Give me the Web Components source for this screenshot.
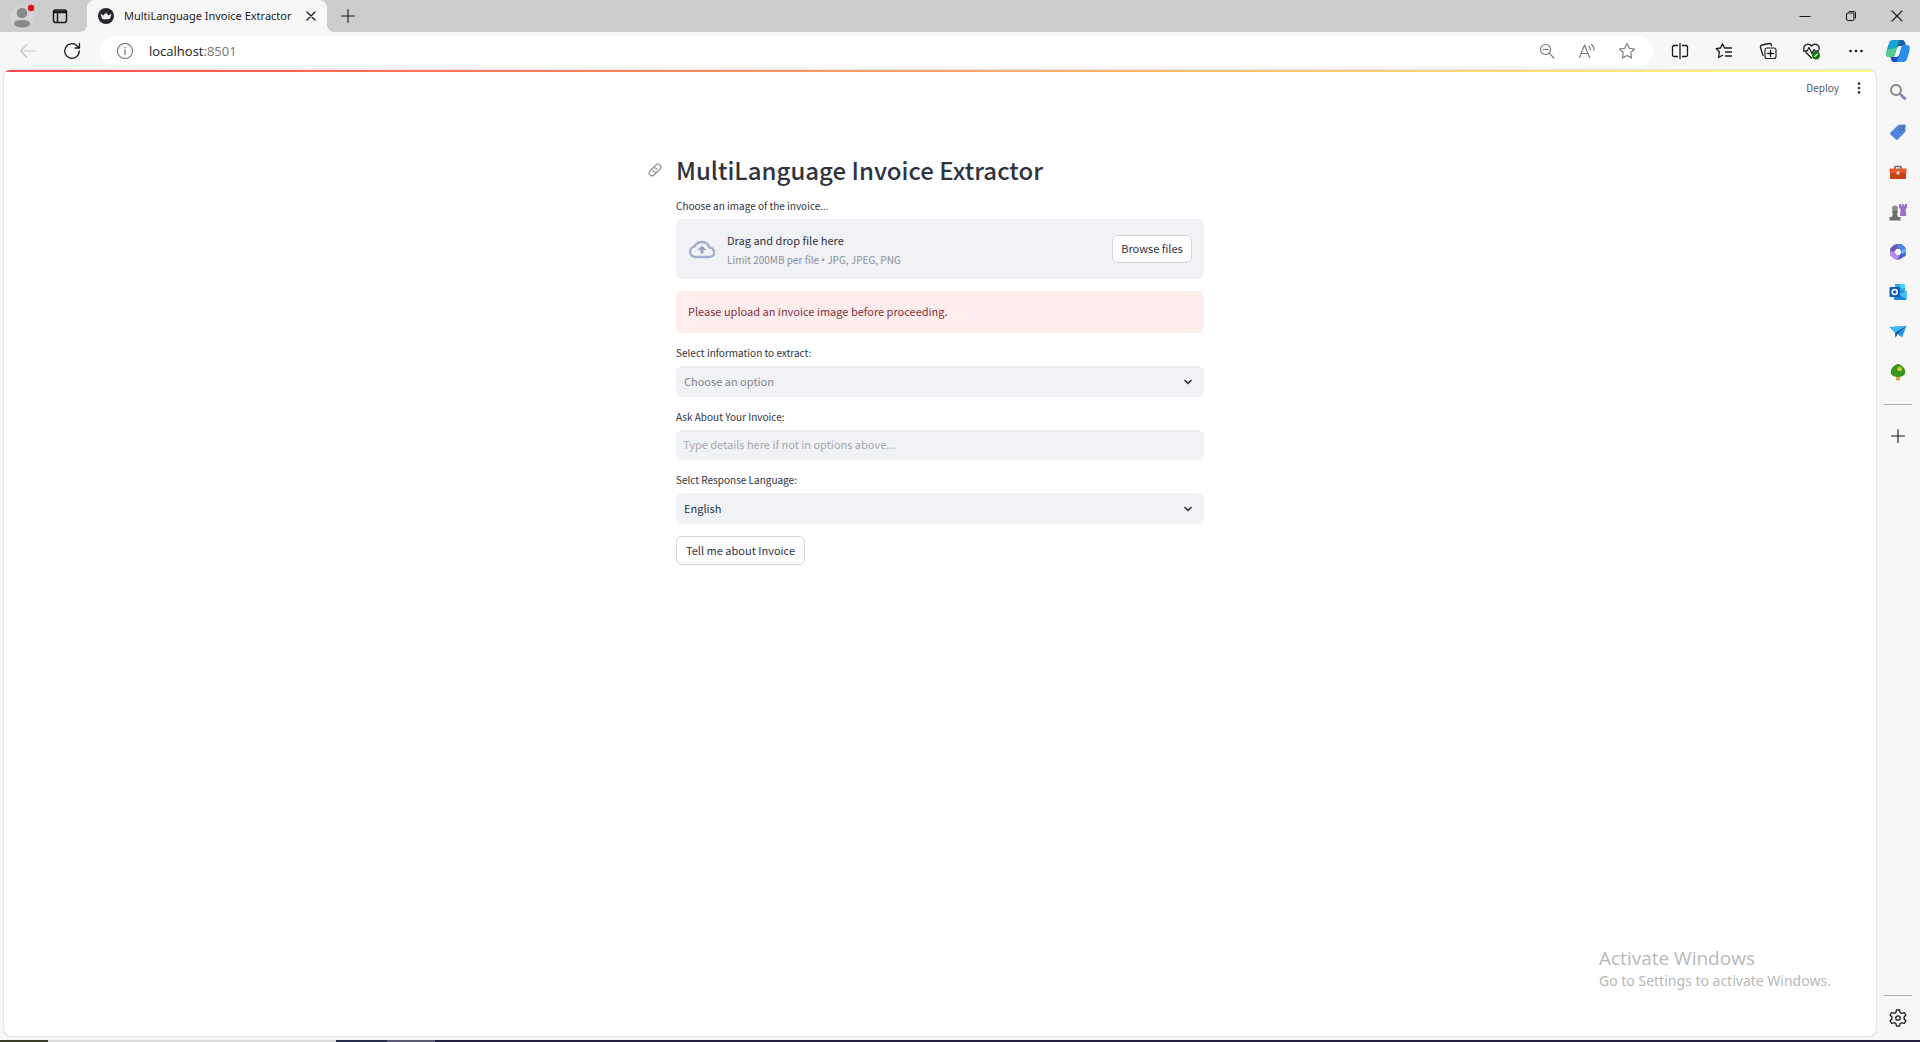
<!DOCTYPE html>
<html lang="en">
<head>
<meta charset="utf-8">
<title>MultiLanguage Invoice Extractor</title>
<style>
html,body{margin:0;height:100%}
body{font-family:"Open Sans","Noto Sans",sans-serif;font-size:12px;color:#1b1b1b;background:#f7f7f7;
--app-font:"Noto Sans CJK SC","Open Sans",sans-serif;--ink:#31333f;--field:#f0f2f6}
</style>
</head>
<body>
<browser-window>
  <tab-strip slot="tabs" title-text="MultiLanguage Invoice Extractor"></tab-strip>
  <tool-bar slot="toolbar"></tool-bar>
  <side-bar slot="sidebar"></side-bar>
  <app-page>
    <page-title>MultiLanguage Invoice Extractor</page-title>
    <file-uploader label="Choose an image of the invoice..." hint="Limit 200MB per file • JPG, JPEG, PNG"></file-uploader>
    <alert-box>Please upload an invoice image before proceeding.</alert-box>
    <select-field label="Select information to extract:" value="Choose an option" empty></select-field>
    <text-field label="Ask About Your Invoice:" placeholder="Type details here if not in options above..."></text-field>
    <select-field label="Selct Response Language:" value="English"></select-field>
    <action-button>Tell me about Invoice</action-button>
  </app-page>
  <activation-note slot="note"></activation-note>
</browser-window>
<script>
const svg=(w,h,body)=>`<svg width="${w}" height="${h}" viewBox="0 0 ${w} ${h}" fill="none" stroke="currentColor" stroke-width="1.1" stroke-linecap="round" stroke-linejoin="round" aria-hidden="true">${body}</svg>`;
const ICONS={
profile:svg(26,26,`<circle cx="13" cy="14" r="12" fill="#d6d4d2" stroke="none"/><circle cx="13" cy="10" r="5.3" fill="#8b8987" stroke="none"/><path d="M5 20.500c0-2.500 3-3.500 8-3.500s8 1 8 3.500-3.500 4-8 4-8-1.500-8-4z" fill="#8b8987" stroke="none"/><circle cx="22" cy="5" r="3.200" fill="#e00b1c" stroke="none"/>`),
tabs:svg(16,16,`<rect x="1.500" y="2" width="13" height="12.500" rx="2" stroke-width="1.500"/><path d="M1.500 3.500h13M2 4.500h12M5.500 5v9" stroke-width="1.500"/>`),
crown:svg(16,16,`<circle cx="8" cy="8" r="8" fill="#262730" stroke="none"/><path d="M2.500 5.800 5.500 7.500 8 4.500l2.500 3 3-1.700-1.500 5q-4 1-8 0z" fill="#f4f4f6" stroke="none"/>`),
close:svg(10,10,`<path d="M1 1l8 8M9 1l-8 8" stroke-width="1.300"/>`),
plus:svg(16,16,`<path d="M8 1.500v13M1.500 8h13"/>`),
min:svg(12,12,`<path d="M1 6.500h10"/>`),
restore:svg(12,12,`<rect x="1.500" y="3" width="7.500" height="7.500" rx="1.500"/><path d="M4 1.500h4.500a2 2 0 0 1 2 2V8"/>`),
winclose:svg(12,12,`<path d="M1 1l10 10M11 1L1 11"/>`),
back:svg(18,16,`<path d="M16.500 8H1.500M8 1.500 1.500 8 8 14.500" stroke="#c6c6c6"/>`),
reload:svg(18,18,`<path d="M16.300 9A7.300 7.300 0 1 1 14 3.700L16.300 6M16.500 1.500V6H12" stroke-width="1.300"/>`),
info:svg(18,18,`<circle cx="9" cy="9" r="7.500"/><path d="M9 8v4.500M9 5.500v.3" stroke-width="1.300"/>`),
zoomout:svg(16,16,`<circle cx="6.500" cy="6.500" r="5"/><path d="M4 6.500h5M10.300 10.300l4.700 4.700"/>`),
aloud:svg(18,16,`<path d="M1.500 14.500 6.500 2l5 12.500M3.200 10.500h6.600M11 3.500q1.500 1.500 1.300 3.500M13.500 1.500q3 2.500 2.500 6"/>`),
star:svg(18,18,`<path d="M9 1.500l2.300 4.800 5.200.7-3.800 3.700.9 5.300L9 13.500 4.400 16l.9-5.300L1.500 7l5.200-.7z"/>`),
split:svg(18,18,`<path d="M9 1.500v15M6.500 3.500H3a1.500 1.500 0 0 0-1.500 1.500v8A1.500 1.500 0 0 0 3 14.500h3.500M11.500 3.500H15A1.500 1.500 0 0 1 16.500 5v8a1.500 1.500 0 0 1-1.500 1.500h-3.500" stroke-width="1.300"/>`),
favs:svg(18,18,`<path d="M11 6 9.500 6 7.500 1.800 5.500 6 1.200 6.700l3.200 3-.8 5.800 3.900-2.200M11 6h5.500M10.500 10h6M10.500 14h6" stroke-width="1.300"/>`),
collect:svg(18,18,`<rect x="6" y="6" width="11" height="10.500" rx="2"/><path d="M11.500 8.500v6M8.500 11.500h6M4 13.500l-2.500-8a2 2 0 0 1 1.500-2.500l7-1.500a2 2 0 0 1 2.500 2" stroke-width="1.300"/>`),
heart:svg(20,18,`<path d="M2 7.500C1 2.500 6.500.5 9.500 4c3-3.500 8.500-1.500 7.500 3.500M4 10.500l5.500 5.500M1.500 9h3.500l2-3.500 3 6 2-4 1 1.500h3.500" stroke-width="1.300"/><circle cx="14" cy="13.500" r="4" fill="#107c10" stroke="none"/><path d="M12.500 14.500l2.800-2.300" stroke="#fff"/>`),
dots:svg(16,6,`<g fill="currentColor" stroke="none"><circle cx="2.500" cy="3" r="1.300"/><circle cx="8" cy="3" r="1.300"/><circle cx="13.500" cy="3" r="1.300"/></g>`),
copilot:svg(24,24,`<g stroke="none"><path d="M6.500 1H16q2 0 2.700 2l1.300 4h-6q-2.500 0-3.300 3L9 16q-.8 2-2.500 2H3q-3 0-2.800-3.500Q.5 11 3 4 4 1 6.500 1z" fill="#19a3d0"/><path d="M1 10.500 10.500 9 9 16q-.8 2-2.500 2H3q-3 0-2.800-3.500Q.4 12.500 1 10.500z" fill="#58cb8e"/><path d="M13 1h3q2 0 2.700 2L20 7h-6q-2 0-3 2 1-4.500 2-8z" fill="#1263a3"/><path d="M17.500 6H21q3 0 2.800 3.500Q23.500 13 21 20q-1 3-3.500 3H8q-2 0-2.700-2L4.500 18H10q2.500 0 3.300-3L15 8q.8-2 2.500-2z" fill="#2c8df0"/><path d="M4.500 18H10q2 0 3-2-1 4.500-2.500 7H8q-2 0-2.700-2z" fill="#1650c4"/><path d="M13.500 7h2L12.500 16q-.7 2-2.500 2H8.500L11.500 8.500Q12 7 13.500 7z" fill="#f7f7f7"/></g>`),
search:svg(18,18,`<circle cx="7" cy="7" r="5" stroke="#858585" stroke-width="2"/><path d="M11 11l1.500 1.500" stroke="#858585" stroke-width="2"/><path d="M13 13l2.800 2.500" stroke="#9875cf" stroke-width="3"/>`),
tag:svg(18,18,`<path d="M1.500 9.500 9.500 1.800l6-.3q1.300 0 1.300 1.300l-.5 6-7.500 7.700q-1 .8-2 0L1.500 11.500q-.8-1 0-2z" fill="#4f86dc" stroke="none"/><circle cx="13" cy="5" r="1.300" fill="#fff" stroke="#244a8a"/>`),
toolbox:svg(18,16,`<path d="M6 5V2.500h6V5" stroke="#7b6661" stroke-width="1.500"/><rect x=".5" y="4.500" width="17" height="5" rx="1" fill="#e8562a" stroke="none"/><path d="M1 9h16v5q0 1-1 1H2q-1 0-1-1z" fill="#c9400f" stroke="none"/><circle cx="9" cy="9" r="1.700" fill="#d9d9d9" stroke="none"/>`),
chess:svg(18,18,`<g stroke="none"><path d="M10 1h2v1.500h1.200V1h1.600v1.500H16V1h2v4l-1.500 1 .8 7H11l.5-7L10 5z" fill="#9a6fc9"/><circle cx="6" cy="5.500" r="3" fill="#8c8c88"/><path d="M3 8h6v1.500L8 10l1 4h2.500v3.500H.5V14H3l1-4-1-.5z" fill="#6e6e6a"/></g>`),
m365:svg(18,18,`<g stroke="none"><path d="M9 1 16.500 5.200v7.600L9 17l-7.500-4.200V5.200z" fill="#5f6fd8"/><path d="M9 1 5.500 1.500 1.500 5v6.500L5.500 10V6.500L11 4z" fill="#6a55bd"/><path d="M1.500 9 5.500 7.500 6.500 11l4 1.500L9 17l-3.500-.7-4-3.500z" fill="#b98bec"/><path d="M9 1h3.500l4 3.500V9L12.500 11V7L8 5z" fill="#4a86e0"/><path d="M16.500 7v5.800L9 17l1.500-4.500 3-3z" fill="#3f62cf"/><path d="M12.800 7.500 16.500 5v4l-3.500 2.500z" fill="#5cb8f2"/><path d="M7.300 6h3.500l1.700 3-1.700 3H7.300L5.600 9z" fill="#f7f7f7"/></g>`),
outlook:svg(18,18,`<g stroke="none"><rect x="6" y="1" width="10" height="8" fill="#35a7e8"/><rect x="11" y="1" width="5" height="4" fill="#50d0ff"/><path d="M5 8h12.500v8q0 1-1 1H6q-1 0-1-1z" fill="#1b84d6"/><path d="M17.500 8v8l-9-5z" fill="#3fc0f0"/><rect x=".5" y="4" width="10.500" height="10" rx="1" fill="#0a60b5"/></g><circle cx="5.700" cy="9" r="2.500" stroke="#fff" stroke-width="1.500"/>`),
plane:svg(18,16,`<g stroke="none"><path d="M.5 3 17.500 2 13 13.500 8 9.500z" fill="#2a9be6"/><path d="M.5 3 17.500 2 6 9z" fill="#3fb8f2"/><path d="M6 9 17.500 2 8.500 10l-2 4z" fill="#12559c"/></g>`),
tree:svg(18,18,`<g stroke="none"><path d="M7 12h4v5q-2 1.500-4 0z" fill="#dca33b"/><path d="M5 3q4-4 8 0 4 3 3 8-2 3-7 3T2 11q-1-5 3-8z" fill="#39941f"/><circle cx="10.500" cy="6" r="2.500" fill="#9cc531"/><circle cx="10.500" cy="6" r="1.200" fill="#f4d340"/></g>`),
gear:svg(18,18,`<circle cx="9" cy="9" r="2.200" stroke-width="1.300"/><path d="M7.500 1h3l.6 2.500 1.700.9 2.500-.8L16.900 6l-1.800 2v2l1.800 2-1.600 2.500-2.500-.8-1.700.9-.6 2.500h-3l-.6-2.500-1.700-.9-2.500.8L1.100 12l1.800-2V8L1.100 6l1.600-2.500 2.500.8 1.700-.9z" stroke-width="1.300"/>`),
kebab:svg(4,12,`<g fill="#31333f" stroke="none"><circle cx="2" cy="1.600" r="1.300"/><circle cx="2" cy="6" r="1.300"/><circle cx="2" cy="10.400" r="1.300"/></g>`),
link:svg(14,14,`<g stroke="#85868d" transform="rotate(-45 7 7)"><path d="M6.500 10H3a3 3 0 0 1 0-6h3a3 3 0 0 1 2.800 4"/><path d="M7.500 4H11a3 3 0 0 1 0 6H8a3 3 0 0 1-2.800-4"/></g>`),
cloud:svg(28,20,`<path d="M7 18a5.300 5.300 0 0 1-.5-10.500A8 8 0 0 1 21.300 8.500 4.700 4.700 0 0 1 21.500 18z" stroke="#a3aeca" stroke-width="2.300"/><path d="M14 6.500l4.500 4.500h-3v3.500h-3V11h-3z" fill="#98a4c4" stroke="none"/>`),
chevron:svg(8,6,`<path d="M1 1.500l3 2.800 3-2.800" stroke="#31333f" stroke-width="1.700"/>`)
};
const define=(name,css,html,after)=>customElements.define(name,class extends HTMLElement{
  constructor(){super();const r=this.attachShadow({mode:"open"});
    const t=document.createElement("template");
    t.innerHTML=`<style>*{box-sizing:border-box}${css}</style>${typeof html==="function"?html(this):html}`;
    r.append(t.content.cloneNode(true));if(after)after(this,r);}
});
const cell=(icon,label)=>`<button type="button" aria-label="${label}"><ui-icon name="${icon}"></ui-icon></button>`;
const buttonCss="button{font:inherit;color:inherit;border:0;background:none;padding:0;display:flex;align-items:center;justify-content:center;flex:none}";

define("ui-icon",":host{display:flex;flex:none}svg{display:block}",el=>ICONS[el.getAttribute("name")]);

define("browser-window",`:host{display:flex;flex-direction:column;min-height:100vh;position:relative}
.middle{flex:1;display:flex}
.frame{flex:1;margin:0 0 4px 4px;border-radius:6px 8px 8px 8px;background:#fff;box-shadow:0 0 2px #bbb;overflow:hidden}
.task{height:2px;display:flex;background:#22203a}.task i{display:block}
.a{width:48px;background:#3a3d2a}.b{width:288px;background:#dcdcdc}.c{width:51px;background:#26304a}.d{width:48px;background:#5a5a72}`,
`<slot name="tabs"></slot><slot name="toolbar"></slot><div class="middle"><div class="frame"><slot></slot></div><slot name="sidebar"></slot></div><slot name="note"></slot><div class="task"><i class="a"></i><i class="b"></i><i class="c"></i><i class="d"></i></div>`);

define("tab-strip",`:host{display:flex;height:32px;background:#cdcdcd;align-items:stretch}${buttonCss}
.profile{width:44px}.list{width:32px;margin-right:11px}
.tab{width:240px;display:flex;align-items:center;background:#f7f7f7;border-radius:8px 8px 0 0;padding:0 4px 0 11px;gap:10px;position:relative}
.tab::before,.tab::after{content:"";position:absolute;bottom:0;width:8px;height:8px}
.tab::before{left:-8px;background:radial-gradient(circle at 0 0,#cdcdcd 8px,#f7f7f7 8px)}
.tab::after{right:-8px;background:radial-gradient(circle at 100% 0,#cdcdcd 8px,#f7f7f7 8px)}
.name{flex:1;min-width:0;white-space:nowrap;font-family:"Noto Sans",sans-serif;font-size:11px;line-height:16px}.tab button{width:24px}.new{width:42px}.win{margin-left:auto;display:flex}.win button{width:46px}`,
el=>`<button class="profile" type="button" aria-label="Profile"><ui-icon name="profile"></ui-icon></button><button class="list" type="button" aria-label="Tab actions"><ui-icon name="tabs"></ui-icon></button>
<div class="tab"><ui-icon name="crown"></ui-icon><span class="name">${el.getAttribute("title-text")}</span>${cell("close","Close tab")}</div>
<button class="new" type="button" aria-label="New tab"><ui-icon name="plus"></ui-icon></button>
<div class="win">${cell("min","Minimize")}${cell("restore","Restore")}${cell("winclose","Close")}</div>`);

define("tool-bar",`:host{display:flex;height:38px;background:#f7f7f7;align-items:center;padding-left:6px}${buttonCss}
button{width:44px;height:30px}.copilot{width:42px;padding-right:2px}
.pill{flex:1;height:30px;margin:0 5px 0 6px;border-radius:15px;background:#fff;display:flex;align-items:center;padding-right:6px;color:#767676;font-size:13px}
.pill button{width:40px}.pill .site{width:49px;padding-left:1px}.url{flex:1}.url b{font-weight:400;color:#1b1b1b}`,
`${cell("back","Back")}${cell("reload","Refresh")}<div class="pill"><button class="site" type="button" aria-label="Site information"><ui-icon name="info"></ui-icon></button><span class="url"><b>localhost</b>:8501</span>${cell("zoomout","Zoom out")}${cell("aloud","Read aloud")}${cell("star","Favorite")}</div>
${cell("split","Split screen")}${cell("favs","Favorites")}${cell("collect","Collections")}${cell("heart","Browser essentials")}${cell("dots","Settings and more")}<button class="copilot" type="button" aria-label="Copilot"><ui-icon name="copilot"></ui-icon></button>`);

define("side-bar",`:host{display:flex;flex-direction:column;width:44px;padding:2px 0}${buttonCss}
button{width:44px;height:40px}hr{width:28px;height:1px;border:0;background:#b4b4b4;margin:12px auto 11px}.foot{margin-top:auto}.foot hr{margin-bottom:2px}`,
`${["search","tag","toolbox","chess","m365","outlook","plane","tree"].map(n=>cell(n,n)).join("")}<hr>${cell("plus","Customize")}<div class="foot"><hr>${cell("gear","Settings")}</div>`);

define("app-page",`:host{display:block;font-family:var(--app-font);color:var(--ink);font-size:11px}${buttonCss}
.bar{height:2px;background:linear-gradient(90deg,#ff4b4b,#fffd80)}
header{height:32px;display:flex;align-items:center;justify-content:flex-end;gap:18px;padding-right:15px;color:#555867;font-size:10px}header button{padding-bottom:1px}
main{display:flex;flex-direction:column;gap:12px;width:528px;margin:0 auto;padding-top:38px}`,
`<div class="bar"></div><header><button type="button">Deploy</button>${cell("kebab","Main menu")}</header><main><slot></slot></main>`);

define("page-title",`:host{display:block}h1{margin:0;font-size:24px;font-weight:500;line-height:34px;padding:11px 0 0;position:relative;white-space:nowrap}
a{position:absolute;left:-28px;top:21px}`,`<h1><a href="#invoice" aria-label="Link to heading"><ui-icon name="link"></ui-icon></a><slot></slot></h1>`);

const labelCss="label{display:block;font-size:10px;line-height:14px;margin-bottom:6px;padding-top:1px}";
define("file-uploader",`:host{display:block;margin-top:-1px}${labelCss}${buttonCss}
.drop{height:60px;border-radius:6px;background:var(--field);display:flex;align-items:center;padding:0 12px;gap:11px}
.text{flex:1;display:flex;flex-direction:column;gap:3px;line-height:17px;padding-top:2px}small{font-size:10px;line-height:16px;color:#8c8e97}i{font:10px/14px "Open Sans"}
button{width:80px;height:28px;background:#fff;border:1px solid #d4d5d9;border-radius:6px;padding-bottom:2px}input{display:none}`,
el=>`<label for="f">${el.getAttribute("label")}</label><div class="drop"><ui-icon name="cloud"></ui-icon><div class="text"><span>Drag and drop file here</span><small>${el.getAttribute("hint").replace("•","<i>•</i>")}</small></div><input id="f" type="file" accept=".jpg,.jpeg,.png"><button type="button">Browse files</button></div>`,
(el,r)=>r.querySelector("button").addEventListener("click",()=>r.querySelector("input").click()));

define("alert-box",":host{display:block;padding:11px 12px 13px;line-height:18px;border-radius:6px;background:#ffecec;color:#7d353b}","<slot></slot>");

define("select-field",`:host{display:block}${labelCss}.box{display:grid;align-items:center}
select{grid-area:1/1;appearance:none;width:100%;height:31px;border:0;border-radius:6px;background:var(--field);font:inherit;color:inherit;padding:0 8px 2px}
:host([empty]) select{color:#83858f}ui-icon{grid-area:1/1;justify-self:end;margin-right:12px;pointer-events:none}`,
el=>`<label for="s">${el.getAttribute("label")}</label><div class="box"><select id="s"><option>${el.getAttribute("value")}</option></select><ui-icon name="chevron"></ui-icon></div>`);

define("text-field",`:host{display:block}${labelCss}
input{display:block;width:100%;height:30px;border:0;border-radius:6px;background:var(--field);font:inherit;color:inherit;padding:0 7px 2px}input::placeholder{color:#a6a8b0;opacity:1}`,
el=>`<label for="t">${el.getAttribute("label")}</label><input id="t" type="text" placeholder="${el.getAttribute("placeholder")}">`);

define("action-button",`:host{display:flex}button{font:inherit;color:inherit;height:29px;padding:0 9px 1px;background:#fff;border:1px solid #d4d5d9;border-radius:6px}`,`<button type="button"><slot></slot></button>`);

define("activation-note",`:host{position:absolute;left:calc(100% - 321px);bottom:51px;color:#b9b9b9;white-space:nowrap;pointer-events:none;font-size:14px;line-height:20px}
strong{display:block;font-weight:400;font-size:19px;line-height:26px}span{font-family:"Noto Sans",sans-serif}`,`<strong>Activate Windows</strong><span>Go to Settings to activate Windows.</span>`);
</script>
</body>
</html>
